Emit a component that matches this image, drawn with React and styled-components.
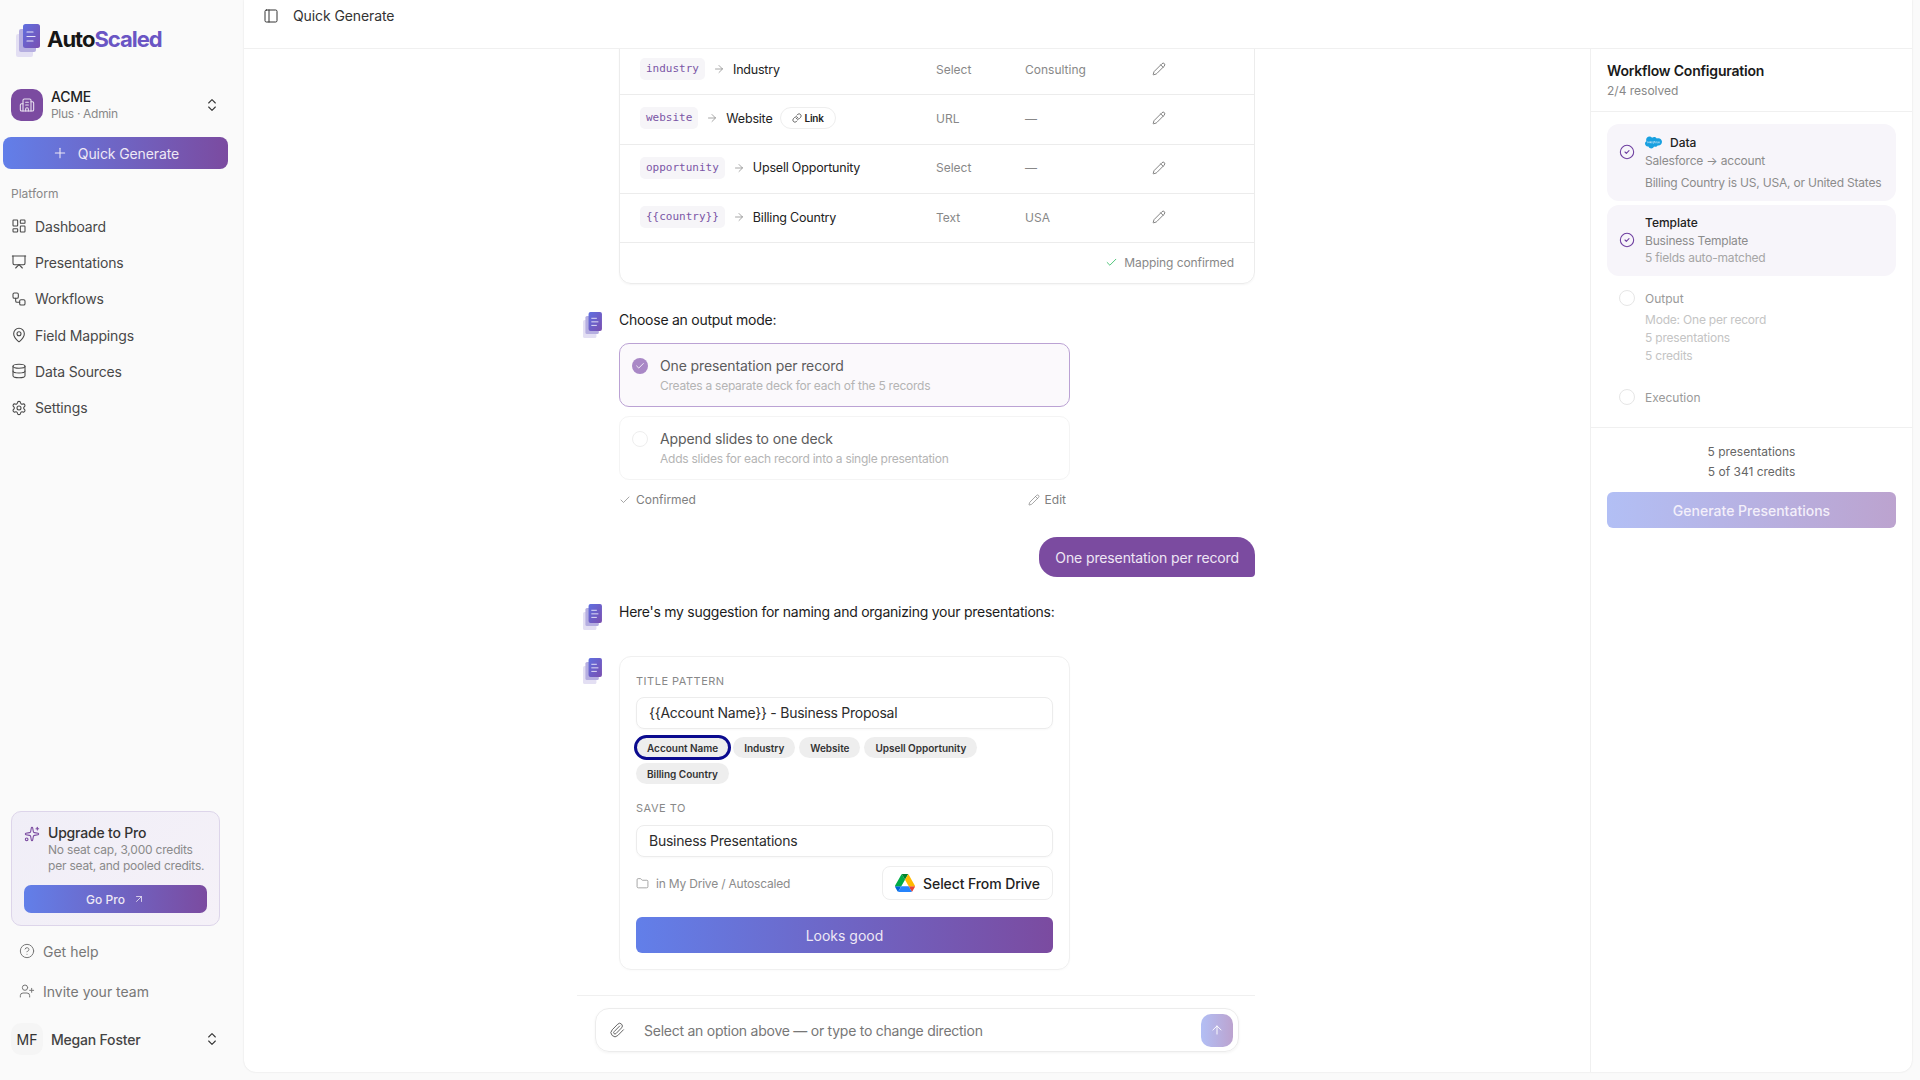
import React from 'react';
import styled, { createGlobalStyle } from 'styled-components';
import {
  ArrowRight, ArrowUp, ArrowUpRight, Building2, Check, ChevronsUpDown, CircleCheck, CircleHelp,
  Database, Folder, LayoutDashboard, Link, MapPin, PanelLeft, Paperclip, Pencil, Plus,
  Presentation, Settings, Sparkles, UserPlus, Workflow,
} from 'lucide-react';
import { FaSalesforce } from 'react-icons/fa';

const GRADIENT = 'linear-gradient(90deg, #627fe9 0%, #7b4ba0 100%)';
const SOFT_GRADIENT = 'linear-gradient(90deg, #b2bff5 0%, #bca3cf 100%)';

const GlobalStyle = createGlobalStyle`
  * { box-sizing: border-box; }
  html, body { margin: 0; height: 100%; }
  body {
    background: #fafafa;
    font-family: Inter, "Noto Sans", sans-serif;
    color: #1a1a1a;
    overflow: hidden;
  }
`;

const Shell = styled.div`
  display: flex;
  height: 100vh;
`;

const Sidebar = styled.aside`
  width: 244px;
  flex-shrink: 0;
  display: flex;
  flex-direction: column;
  padding-top: 24px;
  padding-bottom: 26px;
`;

const LogoRow = styled.div`
  display: flex;
  align-items: center;
  gap: 7px;
  height: 33px;
  padding-left: 16px;
  margin-bottom: 32px;
`;

const LogoText = styled.div`
  font-size: 22px;
  font-weight: 700;
  letter-spacing: -1px;
  color: #161616;
  padding-bottom: 3px;
  span { color: #6a55c4; }
`;

const OrgRow = styled.div`
  display: flex;
  align-items: center;
  height: 32px;
  padding: 0 24px 0 11px;
  margin-bottom: 16px;
`;

const OrgIcon = styled.div`
  width: 32px;
  height: 32px;
  border-radius: 10px;
  background: #7b4ba0;
  color: #e9e2f0;
  display: flex;
  align-items: center;
  justify-content: center;
  margin-right: 8px;
`;

const OrgText = styled.div`
  flex: 1;
`;

const OrgName = styled.div`
  font-size: 14px;
  line-height: 17px;
  font-weight: 500;
  letter-spacing: -0.2px;
  color: #222;
`;

const OrgPlan = styled.div`
  font-size: 12px;
  line-height: 16px;
  margin-top: 1px;
  letter-spacing: -0.3px;
  color: #888;
`;

const UpDown = styled(ChevronsUpDown)`
  color: #333;
  flex-shrink: 0;
`;

const GradientButton = styled.div`
  display: flex;
  align-items: center;
  justify-content: center;
  color: ${(p) => p.$color || '#eee8f5'};
  background: ${(p) => (p.$soft ? SOFT_GRADIENT : GRADIENT)};
  border-radius: ${(p) => p.$radius || 6}px;
  height: ${(p) => p.$height || 36}px;
  font-size: ${(p) => p.$size || 14}px;
  font-weight: 500;
  gap: ${(p) => p.$gap || 0}px;
`;

const QuickButton = styled(GradientButton)`
  width: 225px;
  margin-left: 3px;
  font-weight: 400;
  letter-spacing: -0.1px;
`;

const SectionLabel = styled.div`
  font-size: 12px;
  line-height: 16px;
  color: #888;
  padding-left: 11px;
  margin-top: 17px;
  margin-bottom: 6px;
`;

const NavItem = styled.div`
  display: flex;
  align-items: center;
  height: 36.3px;
  padding-left: 11px;
  gap: 8px;
  font-size: 14px;
  color: #484848;
  letter-spacing: -0.15px;
`;

const Spacer = styled.div`
  flex: 1;
`;

const UpgradeCard = styled.div`
  width: 209px;
  margin-left: 11px;
  padding: 12px 12px 12px;
  border: 1px solid #ddd5ea;
  border-radius: 10px;
  background: linear-gradient(135deg, #f0eef7 0%, #f5f1f8 100%);
`;

const UpgradeHead = styled.div`
  display: flex;
  gap: 8px;
`;

const UpgradeIcon = styled(Sparkles)`
  color: #7b4ba0;
  margin-top: 2px;
  flex-shrink: 0;
`;

const UpgradeTitle = styled.div`
  font-size: 14px;
  line-height: 18px;
  font-weight: 500;
  letter-spacing: -0.2px;
  color: #333;
`;

const UpgradeDesc = styled.div`
  font-size: 12px;
  line-height: 16px;
  color: #8a8a8a;
  white-space: nowrap;
  letter-spacing: -0.2px;
`;

const GoProButton = styled(GradientButton)`
  margin-top: 11px;
`;

const HelpList = styled.div`
  margin-top: 5px;
  margin-bottom: 13px;
`;

const HelpItem = styled.div`
  display: flex;
  align-items: center;
  height: 40px;
  padding-left: 19px;
  gap: 8px;
  font-size: 14px;
  color: #777;
`;

const UserRow = styled.div`
  display: flex;
  align-items: center;
  height: 30px;
  padding: 0 24px 0 11px;
`;

const UserBadge = styled.div`
  width: 32px;
  height: 32px;
  border-radius: 10px;
  background: #f5f5f5;
  font-size: 14px;
  color: #333;
  display: flex;
  align-items: center;
  justify-content: center;
  margin-right: 8px;
`;

const UserName = styled.div`
  flex: 1;
  font-size: 14px;
  font-weight: 500;
  letter-spacing: -0.2px;
  color: #444;
`;

const Main = styled.main`
  flex: 1;
  min-width: 0;
  margin: 0 8px 8px 0;
  display: flex;
  flex-direction: column;
  background: #fff;
  border-radius: 0 0 12px 12px;
  box-shadow: 0 0 2px rgba(0, 0, 0, 0.12);
  overflow: hidden;
`;

const Header = styled.header`
  height: 49px;
  flex-shrink: 0;
  display: flex;
  align-items: flex-start;
  gap: 14px;
  padding: 8px 0 0 19px;
  border-bottom: 1px solid #f0f0f0;
  font-size: 14px;
  line-height: 16px;
  letter-spacing: -0.1px;
  color: #333;
`;

const Body = styled.div`
  flex: 1;
  min-height: 0;
  display: flex;
`;

const ChatArea = styled.div`
  flex: 1;
  min-width: 0;
  display: flex;
  justify-content: center;
  padding-right: 2px;
`;

const ChatColumn = styled.div`
  width: 678px;
  display: flex;
  flex-direction: column;
`;

const Scroll = styled.div`
  flex: 1;
  min-height: 0;
  overflow: hidden;
`;

const MappingCard = styled.div`
  margin: -4px 0 0 42px;
  border: 1px solid #ececec;
  border-radius: 0 0 12px 12px;
  box-shadow: 0 1px 2px rgba(0, 0, 0, 0.04);
`;

const MappingRow = styled.div`
  display: grid;
  grid-template-columns: 296px 89px 122px 1fr;
  align-items: center;
  height: 49.3px;
  padding: 0 0 2px 20px;
  border-bottom: 1px solid #ececec;
  font-size: 12px;
  color: #888;
`;

const FieldCell = styled.div`
  display: flex;
  align-items: center;
  gap: 8px;
  font-size: 12.5px;
  color: #222;
  letter-spacing: -0.2px;
`;

const FieldCode = styled.code`
  font-family: "DejaVu Sans Mono", "Liberation Mono", monospace;
  font-size: 11px;
  line-height: 22px;
  height: 22px;
  padding: 0 6px;
  border-radius: 5px;
  background: #f6f5f8;
  color: #7b55a6;
  letter-spacing: 0;
`;

const LinkTag = styled.span`
  display: inline-flex;
  align-items: center;
  gap: 2px;
  height: 22px;
  padding: 0 11px;
  border: 1px solid #eee;
  border-radius: 11px;
  font-size: 10px;
  font-weight: 600;
  color: #222;
`;

const EditIcon = styled(Pencil)`
  color: #666;
  margin-left: 5px;
`;

const MappingFooter = styled.div`
  height: 40px;
  display: flex;
  align-items: center;
  justify-content: flex-end;
  gap: 6px;
  padding: 0 20px 1px 0;
  font-size: 12px;
  letter-spacing: -0.08px;
  color: #888;
  svg { color: #35bc66; }
`;

const Message = styled.div`
  display: flex;
  align-items: flex-start;
  gap: 17px;
  margin-top: ${(p) => p.$top}px;
  padding-left: 6px;
`;

const AvatarSlot = styled.div`
  width: 19px;
  height: 20px;
  flex-shrink: 0;
  padding-top: 2px;
`;

const MessageBody = styled.div`
  min-width: 0;
  width: 451px;
`;

const MessageText = styled.div`
  font-size: 14px;
  line-height: 20px;
  color: #1c1c1c;
  white-space: nowrap;
  letter-spacing: -0.26px;
`;

const OptionCard = styled.div`
  display: flex;
  gap: 12px;
  margin-top: ${(p) => p.$top}px;
  padding: 12px;
  border-radius: 10px;
  border: 1px solid ${(p) => (p.$active ? '#bba2d4' : '#f4f4f4')};
  background: ${(p) => (p.$active ? '#fbf9fc' : '#fff')};
`;

const Radio = styled.div`
  width: 16px;
  height: 16px;
  margin-top: 2px;
  border-radius: 50%;
  flex-shrink: 0;
  display: flex;
  align-items: center;
  justify-content: center;
  color: #fff;
  background: ${(p) => (p.$active ? '#a988c6' : '#fff')};
  border: ${(p) => (p.$active ? 'none' : '1px solid #eee')};
`;

const OptionTitle = styled.div`
  font-size: 14px;
  line-height: 20px;
  color: #5c5c5c;
  letter-spacing: -0.12px;
`;

const OptionSub = styled.div`
  font-size: 12px;
  line-height: 16px;
  margin-top: 2px;
  color: #b4b4b4;
  letter-spacing: -0.25px;
`;

const ConfirmRow = styled.div`
  display: flex;
  align-items: center;
  justify-content: space-between;
  margin-top: 12px;
  padding-right: 4px;
  font-size: 12px;
  line-height: 16px;
  color: #808080;
`;

const ConfirmPart = styled.div`
  display: flex;
  align-items: center;
  gap: 5px;
`;

const BubbleRow = styled.div`
  display: flex;
  justify-content: flex-end;
  margin-top: 29px;
`;

const Bubble = styled.div`
  height: 40px;
  padding: 0 16px;
  display: flex;
  align-items: center;
  background: #7b4ba0;
  color: #eee6f4;
  font-size: 14px;
  border-radius: 18px 18px 4px 18px;
  letter-spacing: -0.12px;
`;

const NamingCard = styled.div`
  padding: 17px 16px 16px;
  border: 1px solid #f0f0f0;
  border-radius: 12px;
  width: 451px;
  box-shadow: 0 1px 2px rgba(0, 0, 0, 0.02);
`;

const FieldLabel = styled.div`
  font-size: 11px;
  line-height: 14px;
  letter-spacing: 0.5px;
  text-transform: uppercase;
  color: #888;
  margin-top: ${(p) => p.$top || 0}px;
`;

const TextBox = styled.div`
  height: 32px;
  margin-top: ${(p) => p.$top}px;
  padding: 0 0 1px 12px;
  display: flex;
  align-items: center;
  border: 1px solid #ececec;
  border-radius: 8px;
  box-shadow: 0 1px 2px rgba(0, 0, 0, 0.03);
  font-size: 14px;
  letter-spacing: -0.25px;
  color: #2c2c2c;
`;

const Chips = styled.div`
  display: flex;
  flex-wrap: wrap;
  gap: 5px 4px;
  margin-top: 8px;
`;

const Chip = styled.div`
  height: 21px;
  padding: 0 11px;
  display: flex;
  align-items: center;
  border-radius: 11px;
  background: #eeeeee;
  font-size: 10px;
  font-weight: 600;
  letter-spacing: -0.02px;
  color: #333;
  outline: ${(p) => (p.$focus ? '3px solid #0b0b8f' : 'none')};
  outline-offset: -1px;
`;

const PathRow = styled.div`
  display: flex;
  align-items: center;
  justify-content: space-between;
  margin-top: 9px;
`;

const PathText = styled.div`
  display: flex;
  align-items: center;
  gap: 7px;
  font-size: 12px;
  letter-spacing: -0.2px;
  color: #8c8c8c;
`;

const DriveButton = styled.div`
  height: 34px;
  width: 171px;
  display: flex;
  align-items: center;
  justify-content: center;
  gap: 8px;
  border: 1px solid #eee;
  border-radius: 8px;
  font-size: 14px;
  font-weight: 500;
  color: #222;
  letter-spacing: -0.1px;
`;

const LooksGood = styled(GradientButton)`
  margin-top: 17px;
  font-weight: 400;
`;

const Composer = styled.div`
  flex-shrink: 0;
  border-top: 1px solid #f0f0f0;
  padding: 12px 16px 20px 18px;
`;

const ComposerBox = styled.div`
  height: 44px;
  display: flex;
  align-items: center;
  padding: 0 5px 0 13px;
  border: 1px solid #ececec;
  border-radius: 14px;
  box-shadow: 0 1px 3px rgba(0, 0, 0, 0.05);
`;

const ComposerText = styled.div`
  flex: 1;
  margin-left: 19px;
  font-size: 14px;
  color: #777;
  letter-spacing: -0.25px;
`;

const SendButton = styled.div`
  width: 32px;
  height: 33px;
  border-radius: 10px;
  background: ${SOFT_GRADIENT};
  color: #fff;
  display: flex;
  align-items: center;
  justify-content: center;
`;

const ConfigPanel = styled.aside`
  width: 322px;
  flex-shrink: 0;
  display: flex;
  flex-direction: column;
  border-left: 1px solid #f0f0f0;
`;

const ConfigHead = styled.div`
  height: 63px;
  padding: 12px 16px 0;
  border-bottom: 1px solid #f0f0f0;
`;

const ConfigTitle = styled.div`
  font-size: 14px;
  line-height: 20px;
  font-weight: 600;
  letter-spacing: -0.2px;
  color: #1a1a1a;
`;

const ConfigSub = styled.div`
  font-size: 12px;
  line-height: 16px;
  margin-top: 2px;
  color: #888;
`;

const Steps = styled.div`
  display: flex;
  flex-direction: column;
  gap: 4px;
  padding: 12px 16px 10px;
  border-bottom: 1px solid #f0f0f0;
`;

const Step = styled.div`
  display: flex;
  align-items: flex-start;
  gap: 10px;
  padding: 8px 12px 10px 12px;
  border-radius: 12px;
  background: ${(p) => (p.$done ? '#f7f5fa' : 'transparent')};
`;

const StepMark = styled.div`
  width: 16px;
  height: 16px;
  flex-shrink: 0;
  color: #6f3fa0;
  margin-top: ${(p) => p.$top || 2}px;
  ${(p) => !p.$done && 'border-radius: 50%; border: 1.5px solid #e6e6e6;'}
`;

const StepTitle = styled.div`
  display: flex;
  align-items: center;
  gap: 8px;
  height: ${(p) => p.$height || 20}px;
  font-size: 12px;
  font-weight: ${(p) => (p.$done ? 500 : 400)};
  color: ${(p) => (p.$done ? '#222' : '#9a9a9a')};
`;

const StepLine = styled.div`
  font-size: 12px;
  line-height: ${(p) => p.$line || 16}px;
  margin-top: ${(p) => p.$top || 0}px;
  letter-spacing: -0.2px;
  color: ${(p) => p.$color || '#8c8c8c'};
  white-space: nowrap;
`;

const SalesforceMark = styled(FaSalesforce)`
  color: #18a0e0;
`;

const ConfigFoot = styled.div`
  padding: 14px 16px 0;
`;

const FootLine = styled.div`
  font-size: 12px;
  line-height: 20px;
  text-align: center;
  color: #666;
`;

const GenerateButton = styled(GradientButton)`
  margin-top: 10px;
`;

function PagesLogo({ width, height }) {
  return (
    <svg width={width} height={height} viewBox="0 0 24 33" fill="none">
      <defs>
        <linearGradient id="page-front" x1="0" y1="0" x2="1" y2="1">
          <stop offset="0" stopColor="#5f6fe0" />
          <stop offset="1" stopColor="#7a4fb0" />
        </linearGradient>
      </defs>
      <rect x="0" y="10" width="17" height="23" rx="2" fill="#e3dff3" />
      <rect x="3" y="5" width="17" height="23" rx="2" fill="#b5aee0" />
      <rect x="7" y="0" width="17" height="24" rx="2.5" fill="url(#page-front)" />
      <path d="M11 8h6M11 12.5h8M11 17h6" stroke="#e6e3f8" strokeWidth="1.2" strokeLinecap="round" />
    </svg>
  );
}

function DriveLogo() {
  return (
    <svg width="20" height="18" viewBox="0 0 87.3 78">
      <path d="m6.6 66.85 3.85 6.65c.8 1.4 1.95 2.5 3.3 3.3l13.75-23.8h-27.5c0 1.55.4 3.1 1.2 4.5z" fill="#0066da" />
      <path d="m43.65 25-13.75-23.8c-1.35.8-2.5 1.9-3.3 3.3l-25.4 44a9.06 9.06 0 0 0 -1.2 4.5h27.5z" fill="#00ac47" />
      <path d="m73.55 76.8c1.35-.8 2.5-1.9 3.3-3.3l1.6-2.75 7.65-13.25c.8-1.4 1.2-2.95 1.2-4.5h-27.502l5.852 11.5z" fill="#ea4335" />
      <path d="m43.65 25 13.75-23.8c-1.35-.8-2.9-1.2-4.5-1.2h-18.5c-1.6 0-3.15.45-4.5 1.2z" fill="#00832d" />
      <path d="m59.8 53h-32.3l-13.75 23.8c1.35.8 2.9 1.2 4.5 1.2h50.8c1.6 0 3.15-.45 4.5-1.2z" fill="#2684fc" />
      <path d="m73.4 26.5-12.7-22c-.8-1.4-1.95-2.5-3.3-3.3l-13.75 23.8 16.15 28h27.45c0-1.55-.4-3.1-1.2-4.5z" fill="#ffba00" />
    </svg>
  );
}

const navItems = [
  { icon: LayoutDashboard, label: 'Dashboard' },
  { icon: Presentation, label: 'Presentations' },
  { icon: Workflow, label: 'Workflows' },
  { icon: MapPin, label: 'Field Mappings' },
  { icon: Database, label: 'Data Sources' },
  { icon: Settings, label: 'Settings' },
];

const mappings = [
  { code: 'industry', label: 'Industry', type: 'Select', value: 'Consulting' },
  { code: 'website', label: 'Website', type: 'URL', value: '—', link: true },
  { code: 'opportunity', label: 'Upsell Opportunity', type: 'Select', value: '—' },
  { code: '{{country}}', label: 'Billing Country', type: 'Text', value: 'USA' },
];

const chips = ['Account Name', 'Industry', 'Website', 'Upsell Opportunity', 'Billing Country'];

function SideNav() {
  return (
    <Sidebar>
      <LogoRow>
        <PagesLogo width={24} height={33} />
        <LogoText>Auto<span>Scaled</span></LogoText>
      </LogoRow>
      <OrgRow>
        <OrgIcon><Building2 size={16} strokeWidth={1.6} /></OrgIcon>
        <OrgText>
          <OrgName>ACME</OrgName>
          <OrgPlan>Plus · Admin</OrgPlan>
        </OrgText>
        <UpDown size={16} strokeWidth={1.6} />
      </OrgRow>
      <QuickButton $height={32} $radius={8} $gap={10}>
        <Plus size={16} strokeWidth={1.6} />
        Quick Generate
      </QuickButton>
      <SectionLabel>Platform</SectionLabel>
      {navItems.map((item) => (
        <NavItem key={item.label}>
          <item.icon size={16} strokeWidth={1.6} />
          {item.label}
        </NavItem>
      ))}
      <Spacer />
      <UpgradeCard>
        <UpgradeHead>
          <UpgradeIcon size={16} strokeWidth={1.6} />
          <div>
            <UpgradeTitle>Upgrade to Pro</UpgradeTitle>
            <UpgradeDesc>No seat cap, 3,000 credits</UpgradeDesc>
            <UpgradeDesc>per seat, and pooled credits.</UpgradeDesc>
          </div>
        </UpgradeHead>
        <GoProButton $height={28} $size={12} $gap={8} $radius={7}>
          Go Pro
          <ArrowUpRight size={12} strokeWidth={1.6} />
        </GoProButton>
      </UpgradeCard>
      <HelpList>
        <HelpItem><CircleHelp size={16} strokeWidth={1.5} />Get help</HelpItem>
        <HelpItem><UserPlus size={16} strokeWidth={1.5} />Invite your team</HelpItem>
      </HelpList>
      <UserRow>
        <UserBadge>MF</UserBadge>
        <UserName>Megan Foster</UserName>
        <UpDown size={16} strokeWidth={1.6} />
      </UserRow>
    </Sidebar>
  );
}

function Mapping() {
  return (
    <MappingCard>
      {mappings.map((row) => (
        <MappingRow key={row.code}>
          <FieldCell>
            <FieldCode>{row.code}</FieldCode>
            <ArrowRight size={12} color="#888" strokeWidth={1.5} />
            {row.label}
            {row.link && (
              <LinkTag><Link size={10} strokeWidth={1.6} />Link</LinkTag>
            )}
          </FieldCell>
          <div>{row.type}</div>
          <div>{row.value}</div>
          <EditIcon size={14} strokeWidth={1.4} />
        </MappingRow>
      ))}
      <MappingFooter>
        <Check size={13} strokeWidth={1.6} />
        Mapping confirmed
      </MappingFooter>
    </MappingCard>
  );
}

function OutputChoice() {
  return (
    <Message $top={26}>
      <AvatarSlot><PagesLogo width={19} height={26} /></AvatarSlot>
      <MessageBody>
        <MessageText>Choose an output mode:</MessageText>
        <OptionCard $active $top={13}>
          <Radio $active><Check size={10} strokeWidth={2} /></Radio>
          <div>
            <OptionTitle>One presentation per record</OptionTitle>
            <OptionSub>Creates a separate deck for each of the 5 records</OptionSub>
          </div>
        </OptionCard>
        <OptionCard $top={9}>
          <Radio />
          <div>
            <OptionTitle>Append slides to one deck</OptionTitle>
            <OptionSub>Adds slides for each record into a single presentation</OptionSub>
          </div>
        </OptionCard>
        <ConfirmRow>
          <ConfirmPart><Check size={12} strokeWidth={1.4} />Confirmed</ConfirmPart>
          <ConfirmPart><Pencil size={12} strokeWidth={1.4} />Edit</ConfirmPart>
        </ConfirmRow>
      </MessageBody>
    </Message>
  );
}

function NamingForm() {
  return (
    <Message $top={34}>
      <AvatarSlot><PagesLogo width={19} height={26} /></AvatarSlot>
      <NamingCard>
        <FieldLabel>Title pattern</FieldLabel>
        <TextBox $top={9}>{'{{Account Name}} - Business Proposal'}</TextBox>
        <Chips>
          {chips.map((chip, i) => (
            <Chip key={chip} $focus={i === 0}>{chip}</Chip>
          ))}
        </Chips>
        <FieldLabel $top={17}>Save to</FieldLabel>
        <TextBox $top={10}>Business Presentations</TextBox>
        <PathRow>
          <PathText><Folder size={13} strokeWidth={1.4} />in My Drive / Autoscaled</PathText>
          <DriveButton><DriveLogo />Select From Drive</DriveButton>
        </PathRow>
        <LooksGood>Looks good</LooksGood>
      </NamingCard>
    </Message>
  );
}

function WorkflowPanel() {
  return (
    <ConfigPanel>
      <ConfigHead>
        <ConfigTitle>Workflow Configuration</ConfigTitle>
        <ConfigSub>2/4 resolved</ConfigSub>
      </ConfigHead>
      <Steps>
        <Step $done>
          <StepMark $done $top={12}><CircleCheck size={16} strokeWidth={1.6} /></StepMark>
          <div>
            <StepTitle $done><SalesforceMark size={17} />Data</StepTitle>
            <StepLine $top={1}>Salesforce → account</StepLine>
            <StepLine $top={6}>Billing Country is US, USA, or United States</StepLine>
          </div>
        </Step>
        <Step $done>
          <StepMark $done $top={19}><CircleCheck size={16} strokeWidth={1.6} /></StepMark>
          <div>
            <StepTitle $done $height={19}>Template</StepTitle>
            <StepLine $top={1}>Business Template</StepLine>
            <StepLine $top={1} $color="#a6a6a6">5 fields auto-matched</StepLine>
          </div>
        </Step>
        <Step>
          <StepMark />
          <div>
            <StepTitle>Output</StepTitle>
            <StepLine $top={3} $line={18} $color="#c4c4c4">Mode: One per record</StepLine>
            <StepLine $line={18} $color="#c4c4c4">5 presentations</StepLine>
            <StepLine $line={18} $color="#c4c4c4">5 credits</StepLine>
          </div>
        </Step>
        <Step>
          <StepMark />
          <StepTitle>Execution</StepTitle>
        </Step>
      </Steps>
      <ConfigFoot>
        <FootLine>5 presentations</FootLine>
        <FootLine>5 of 341 credits</FootLine>
        <GenerateButton $soft $color="#f3effa">Generate Presentations</GenerateButton>
      </ConfigFoot>
    </ConfigPanel>
  );
}

export default function App() {
  return (
    <>
      <GlobalStyle />
      <Shell>
        <SideNav />
        <Main>
          <Header>
            <PanelLeft size={16} strokeWidth={1.5} />
            Quick Generate
          </Header>
          <Body>
            <ChatArea>
              <ChatColumn>
                <Scroll>
                  <Mapping />
                  <OutputChoice />
                  <BubbleRow><Bubble>One presentation per record</Bubble></BubbleRow>
                  <Message $top={25}>
                    <AvatarSlot><PagesLogo width={19} height={26} /></AvatarSlot>
                    <MessageText>Here's my suggestion for naming and organizing your presentations:</MessageText>
                  </Message>
                  <NamingForm />
                </Scroll>
                <Composer>
                  <ComposerBox>
                    <Paperclip size={16} color="#666" strokeWidth={1.5} />
                    <ComposerText>Select an option above — or type to change direction</ComposerText>
                    <SendButton><ArrowUp size={14} strokeWidth={1.6} /></SendButton>
                  </ComposerBox>
                </Composer>
              </ChatColumn>
            </ChatArea>
            <WorkflowPanel />
          </Body>
        </Main>
      </Shell>
    </>
  );
}
